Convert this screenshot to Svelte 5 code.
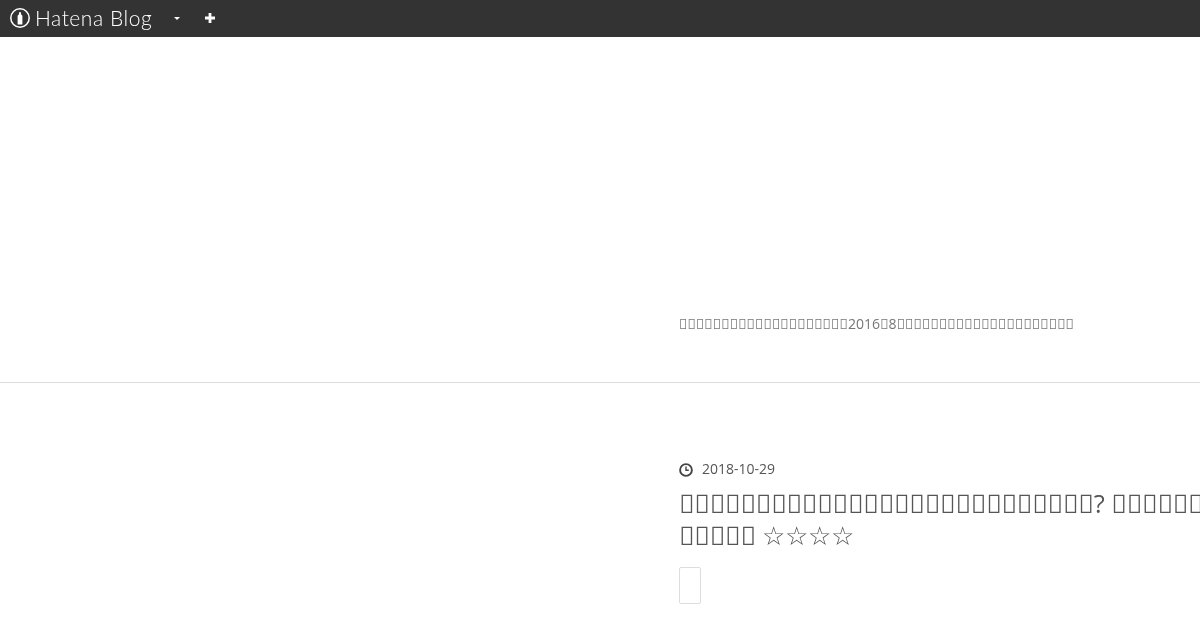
<script>
	const pua = '\uE000'
	const tagline = [[20], '2016', [1], '8', [21]]
	const titleOne = [[27], '? ', [20]]
	const titleTwo = [[5], ' ☆☆☆☆']
</script>

{#snippet mixed(parts)}
	{#each parts as part}
		{#if Array.isArray(part)}<span class="tofu">{pua.repeat(part[0])}</span>{:else}{part}{/if}
	{/each}
{/snippet}

<div class="page">
	<nav class="toolbar">
		<a class="logo" href="#top">
			<svg class="mark" viewBox="0 0 20 20" width="20" height="20" aria-hidden="true">
				<circle cx="10" cy="10" r="9.2" fill="none" stroke="#fff" stroke-width="1.5" />
				<path d="M9 4.2h2v2.4c.9.4 1.4 1.1 1.4 2v7.4a.6.6 0 0 1-.6.6H8.2a.6.6 0 0 1-.6-.6V8.6c0-.9.5-1.6 1.4-2z" fill="#fff" />
			</svg>
			<span class="wordmark">Hatena Blog</span>
		</a>
		<span class="caret"></span>
		<svg class="plus" viewBox="0 0 10 10" width="10" height="10" aria-hidden="true">
			<path d="M3.6 0h2.8v3.6H10v2.8H6.4V10H3.6V6.4H0V3.6h3.6z" fill="#fff" />
		</svg>
	</nav>

	<header class="blog-head">
		<p class="tagline">{@render mixed(tagline)}</p>
	</header>

	<article class="entry">
		<div class="date">
			<svg class="clock" viewBox="0 0 14 14" width="14" height="14" aria-hidden="true">
				<circle cx="7" cy="7" r="5.9" fill="none" stroke="#444" stroke-width="1.9" />
				<path d="M7 3.6v3.7h2.8" fill="none" stroke="#444" stroke-width="1.4" />
			</svg>
			<time datetime="2018-10-29">2018-10-29</time>
		</div>
		<h1>{@render mixed(titleOne)}<br />{@render mixed(titleTwo)}</h1>
		<div class="bookmark"></div>
	</article>
</div>

<style>
	:global(body) {
		background: #fff;
		overflow: hidden;
	}
	.page {
		font-family: "Open Sans", sans-serif;
		color: #444;
		height: 630px;
		overflow: hidden;
		will-change: transform;
	}
	.toolbar {
		display: flex;
		align-items: center;
		box-sizing: border-box;
		height: 37px;
		padding: 0 0 1px 10px;
		background: #333;
	}
	.logo {
		display: flex;
		align-items: center;
		gap: 5px;
		color: #fff;
		text-decoration: none;
		font-family: Lato, sans-serif;
		font-weight: 300;
		font-size: 21px;
		letter-spacing: 0.55px;
		white-space: nowrap;
	}
	.wordmark {
		padding-bottom: 2px;
	}
	.caret {
		margin-left: 22px;
		border: 3px solid transparent;
		border-top: 3px solid #fff;
		border-bottom: 0;
	}
	.plus {
		margin-left: 25px;
	}
	.tofu {
		font-family: "Noto Sans", sans-serif;
	}
	.blog-head {
		height: 346px;
		box-sizing: border-box;
		padding: 277px 0 0 679px;
		border-bottom: 1px solid #ddd;
	}
	.tagline {
		margin: 0;
		font-size: 14.08px;
		line-height: 20px;
		color: #777;
		white-space: nowrap;
	}
	.entry {
		padding: 76px 0 0 679px;
	}
	.date {
		display: flex;
		align-items: center;
		gap: 9px;
		font-size: 14px;
		line-height: 20px;
		color: #555;
	}
	.clock {
		margin-top: 2px;
	}
	h1 {
		margin: 9px 0 0;
		font-size: 25.6px;
		font-weight: 400;
		line-height: 32px;
		color: #555;
		white-space: nowrap;
	}
	.bookmark {
		width: 20px;
		height: 35px;
		margin-top: 15px;
		border: 1px solid #ddd;
		border-radius: 2px;
	}
</style>
